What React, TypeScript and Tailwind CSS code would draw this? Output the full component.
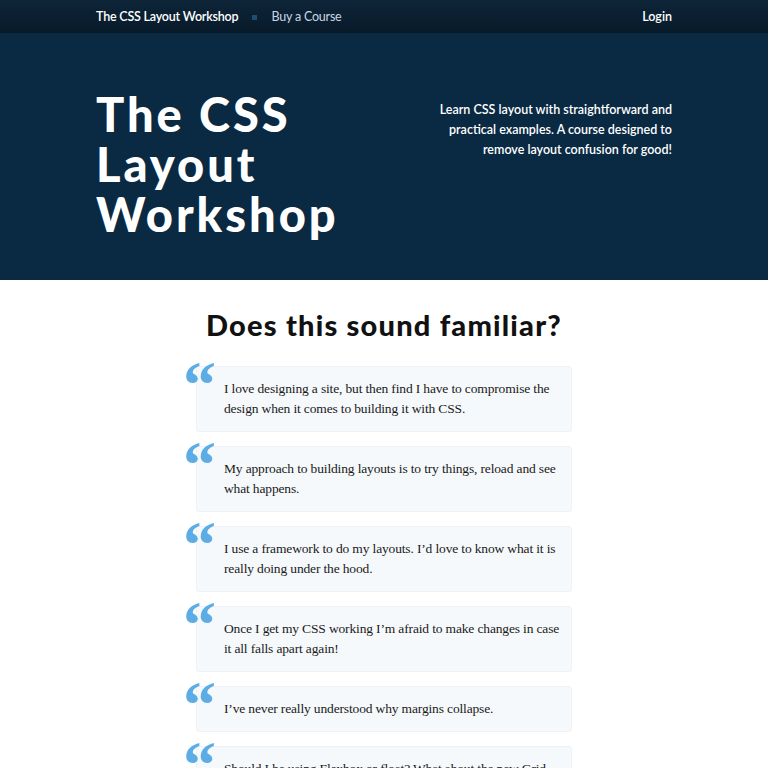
const QUOTES = [
  "I love designing a site, but then find I have to compromise the design when it comes to building it with CSS.",
  "My approach to building layouts is to try things, reload and see what happens.",
  "I use a framework to do my layouts. I’d love to know what it is really doing under the hood.",
  "Once I get my CSS working I’m afraid to make changes in case it all falls apart again!",
  "I’ve never really understood why margins collapse.",
  "Should I be using Flexbox or float? What about the new Grid Layout spec?",
];

const sans = "font-['Lato','Open_Sans',sans-serif]";

export default function App() {
  return (
    <div className="min-h-screen bg-white">
      <header className="h-[33px] bg-gradient-to-b from-[#0e2539] to-[#071a29]">
        <nav className={`mx-auto flex h-full w-[576px] items-center pt-[2px] text-[12.5px] ${sans}`}>
          <a className="font-semibold tracking-[-0.2px] text-white">The CSS Layout Workshop</a>
          <span className="mx-[14px] h-[5px] w-[5px] bg-[#1d4c74]" />
          <a className="tracking-[-0.2px] text-[#c9d6e2]">Buy a Course</a>
          <a className="ml-auto font-semibold text-white">Login</a>
        </nav>
      </header>

      <section className="h-[247px] bg-[#0a2942]">
        <div className="mx-auto flex w-[576px] items-start justify-between pt-[56px]">
          <h1 className={`text-[47px] font-black leading-[50px] tracking-[3px] text-white ${sans}`}>
            The CSS
            <br />
            Layout
            <br />
            Workshop
          </h1>
          <p className={`mt-[11px] whitespace-nowrap text-right text-[12.5px] font-semibold leading-[20px] text-white ${sans}`}>
            Learn CSS layout with straightforward and
            <br />
            practical examples. A course designed to
            <br />
            remove layout confusion for good!
          </p>
        </div>
      </section>

      <main className="mx-auto w-[576px]">
        <h2 className={`mt-[28px] text-center text-[29px] font-black leading-[34px] tracking-[1.2px] text-[#111] ${sans}`}>
          Does this sound familiar?
        </h2>
        <ul className="mx-auto mt-[24px] flex w-[376px] flex-col gap-[14px] pl-0">
          {QUOTES.map((q) => (
            <li
              key={q}
              className="relative rounded-[3px] border border-[#edf2f8] bg-[#f6f9fc] py-[12px] pl-[27px] pr-[8px]"
            >
              <span className="absolute left-[-14px] top-[-14px] font-['Liberation_Serif',serif] text-[66px] font-bold leading-[64px] text-[#5cade6]">
                “
              </span>
              <p className="font-['Liberation_Serif',serif] text-[13.5px] leading-[20px] tracking-[-0.15px] text-[#1a1a1a]">
                {q}
              </p>
            </li>
          ))}
        </ul>
      </main>
    </div>
  );
}
